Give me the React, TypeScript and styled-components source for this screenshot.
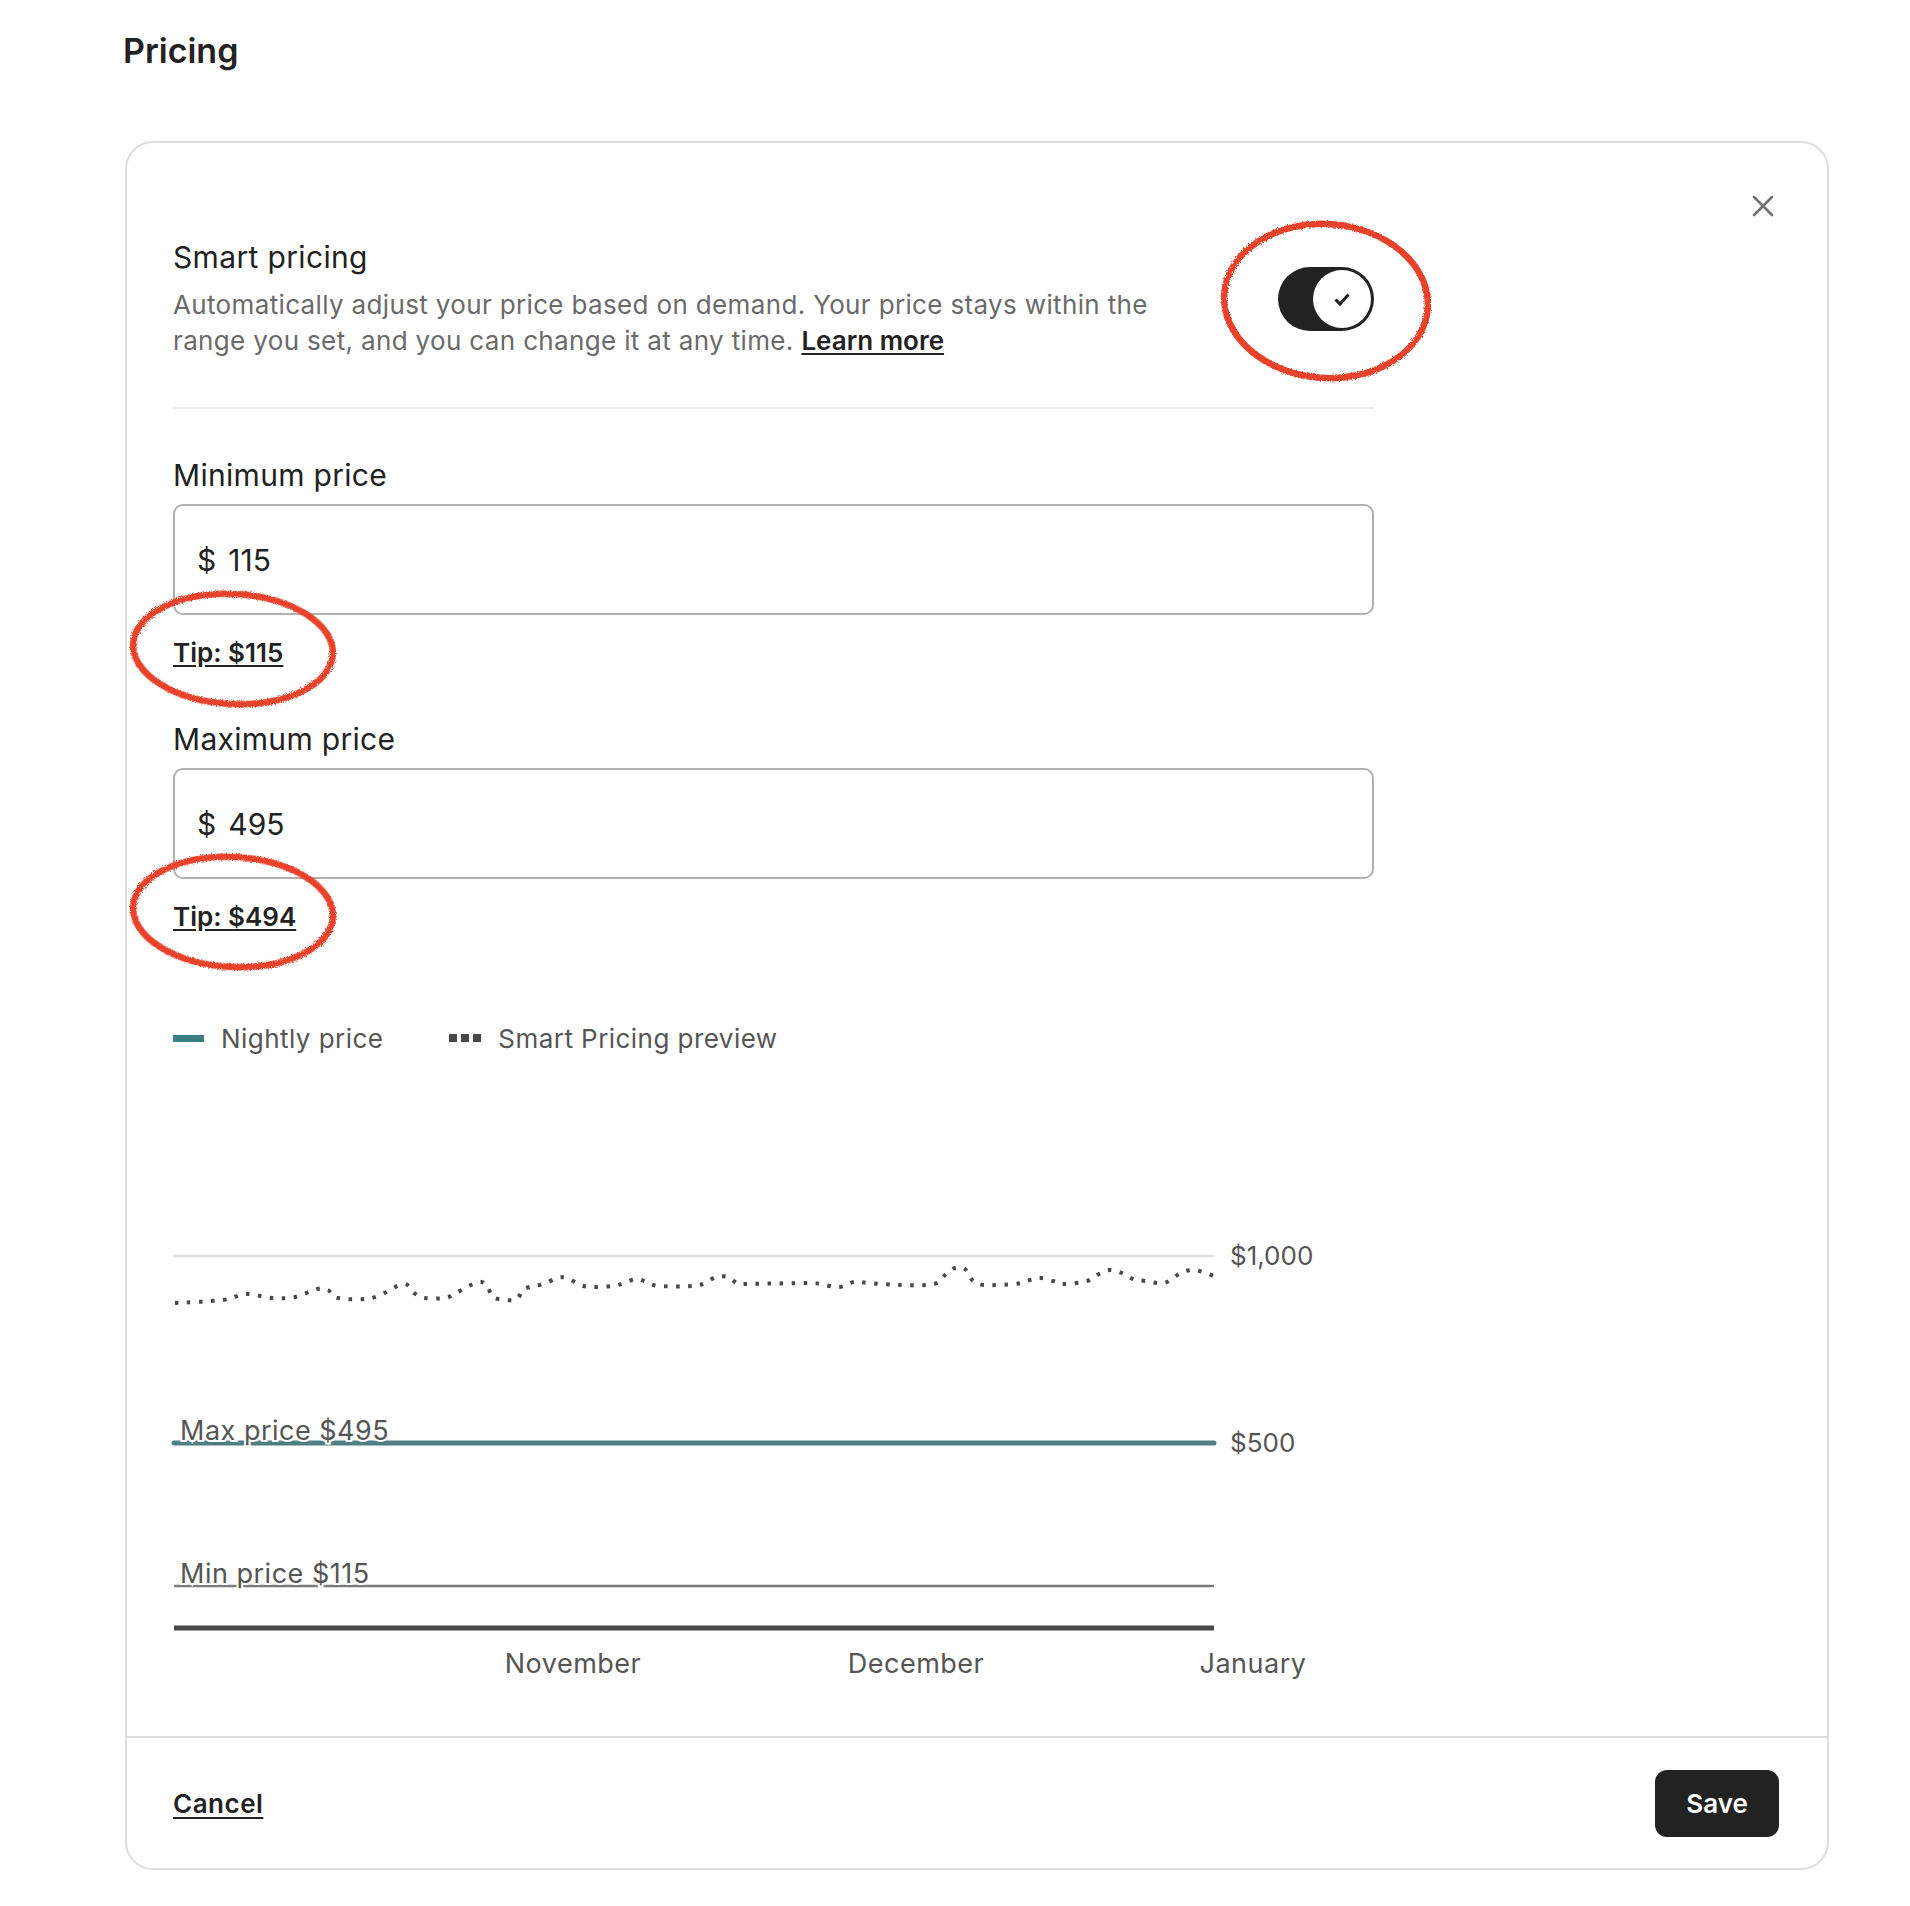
import React from "react";
import styled, { createGlobalStyle } from "styled-components";

const GlobalStyle = createGlobalStyle`
  body {
    margin: 0;
    background: #fff;
    font-family: Inter, "Noto Sans", "Liberation Sans", sans-serif;
    color: #222;
  }
`;

const Page = styled.div`
  position: relative;
  width: 1910px;
  min-height: 1906px;
  padding: 30px 0 0 125px;
  box-sizing: border-box;
`;

const PageTitle = styled.h1`
  margin: 0 0 69px -2px;
  font-size: 34px;
  line-height: 42px;
  font-weight: 600;
  color: #222;
`;

const Card = styled.section`
  position: relative;
  width: 1704px;
  border: 2px solid #dddddd;
  border-radius: 28px;
  box-sizing: border-box;
  background: #fff;
`;

const CloseButton = styled.button`
  position: absolute;
  top: 41px;
  right: 42px;
  width: 44px;
  height: 44px;
  border: none;
  background: transparent;
  display: flex;
  align-items: center;
  justify-content: center;
  cursor: pointer;
  padding: 0;
`;

const CardBody = styled.div`
  padding: 96px 48px 45px 46px;
`;

const Column = styled.div`
  width: 1201px;
`;

const SmartRow = styled.div`
  display: flex;
  align-items: center;
  justify-content: space-between;
  padding-bottom: 48px;
  border-bottom: 2px solid #ebebeb;
`;

const SmartText = styled.div`
  width: 1010px;
`;

const SectionTitle = styled.div`
  font-size: 30px;
  line-height: 36px;
  letter-spacing: 0.35px;
  color: #222;
`;

const Description = styled.p`
  margin: 12px 0 0;
  font-size: 26px;
  line-height: 36px;
  letter-spacing: 0.35px;
  color: #6a6a6a;
`;

const InlineLink = styled.a`
  color: #222;
  font-weight: 600;
  text-decoration: underline;
  text-underline-offset: 3px;
  letter-spacing: 0;
`;

const Switch = styled.button`
  width: 96px;
  height: 64px;
  border: none;
  border-radius: 32px;
  background: #222;
  padding: 3px;
  display: flex;
  justify-content: flex-end;
  align-items: center;
  box-sizing: border-box;
  cursor: pointer;
`;

const Knob = styled.span`
  width: 58px;
  height: 58px;
  border-radius: 50%;
  background: #fff;
  display: flex;
  align-items: center;
  justify-content: center;
`;

const FieldGroup = styled.div<{ $top: number }>`
  margin-top: ${(p) => p.$top}px;
`;

const FieldLabel = styled.label`
  display: block;
  font-size: 30px;
  line-height: 36px;
  letter-spacing: 0.3px;
  color: #222;
`;

const InputBox = styled.div`
  margin-top: 11px;
  height: 111px;
  border: 2px solid #b0b0b0;
  border-radius: 10px;
  box-sizing: border-box;
  display: flex;
  align-items: center;
  gap: 12px;
  padding: 0 22px;
  font-size: 30px;
  color: #222;
`;

const Tip = styled.a`
  display: inline-block;
  margin-top: 22px;
  font-size: 26px;
  line-height: 32px;
  font-weight: 600;
  color: #222;
  text-decoration: underline;
  text-underline-offset: 3px;
`;

const Legend = styled.div`
  margin-top: 87px;
  display: flex;
  align-items: center;
  height: 36px;
`;

const LegendItem = styled.div`
  display: flex;
  align-items: center;
  gap: 17px;
  font-size: 26px;
  letter-spacing: 0.45px;
  color: #555;
  & + & {
    margin-left: 66px;
  }
`;

const SolidSwatch = styled.span`
  width: 31px;
  height: 7px;
  background: #3a8083;
`;

const DotSwatch = styled.span`
  display: flex;
  gap: 4px;
  & > i {
    width: 8px;
    height: 8px;
    background: #484848;
  }
`;

const ChartSvg = styled.svg`
  display: block;
  margin-top: 45px;
  overflow: visible;
`;

const Footer = styled.footer`
  height: 132px;
  border-top: 2px solid #dddddd;
  box-sizing: border-box;
  padding: 0 48px 0 46px;
  display: flex;
  align-items: center;
  justify-content: space-between;
`;

const CancelLink = styled.a`
  font-size: 26px;
  font-weight: 600;
  letter-spacing: 0.5px;
  color: #222;
  text-decoration: underline;
  text-underline-offset: 4px;
`;

const SaveButton = styled.button`
  width: 124px;
  height: 67px;
  border: none;
  border-radius: 12px;
  background: #222;
  color: #fff;
  font-family: inherit;
  font-size: 26px;
  font-weight: 600;
  cursor: pointer;
`;

const Annotations = styled.svg`
  position: absolute;
  top: 0;
  left: 0;
  pointer-events: none;
`;

const preview: [number, number][] = [
  [2, 202], [50, 199], [73, 193], [99, 197], [122, 196], [144, 188], [155, 189],
  [165, 197], [199, 197], [230, 183], [241, 192], [252, 197], [272, 197], [283, 192],
  [305, 181], [314, 185], [320, 196], [333, 199], [344, 198], [350, 189], [360, 185],
  [371, 183], [384, 177], [394, 177], [406, 183], [417, 186], [440, 185], [451, 182],
  [463, 178], [474, 181], [486, 185], [520, 185], [532, 182], [543, 176], [555, 176],
  [565, 183], [574, 183], [635, 182], [647, 183], [666, 186], [681, 181], [696, 182],
  [727, 184], [761, 183], [773, 173], [782, 167], [792, 168], [800, 180], [811, 184],
  [842, 183], [857, 179], [868, 177], [880, 180], [891, 183], [914, 180], [926, 173],
  [937, 169], [949, 172], [960, 178], [972, 180], [991, 182], [1006, 173], [1018, 169],
  [1030, 171], [1041, 175],
];

const smoothPath = (pts: [number, number][]) => {
  let d = `M ${pts[0][0]} ${pts[0][1]}`;
  for (let i = 0; i < pts.length - 1; i++) {
    const p0 = pts[i - 1] || pts[i];
    const p1 = pts[i];
    const p2 = pts[i + 1];
    const p3 = pts[i + 2] || p2;
    const c1x = p1[0] + (p2[0] - p0[0]) / 6;
    const c1y = p1[1] + (p2[1] - p0[1]) / 6;
    const c2x = p2[0] - (p3[0] - p1[0]) / 6;
    const c2y = p2[1] - (p3[1] - p1[1]) / 6;
    d += ` C ${c1x} ${c1y} ${c2x} ${c2y} ${p2[0]} ${p2[1]}`;
  }
  return d;
};

const axisText = {
  fontFamily: "Inter, 'Noto Sans', sans-serif",
  fontSize: 26,
  fill: "#555",
};

const lineText = {
  ...axisText,
  fontSize: 27,
  letterSpacing: 0.5,
};

const PriceChart = () => (
  <ChartSvg width={1201} height={590} viewBox="0 0 1201 590">
    <line x1={1} y1={155} x2={1041} y2={155} stroke="#dddddd" strokeWidth={2.5} />
    <text x={1057} y={164} {...axisText}>$1,000</text>

    <path
      d={smoothPath(preview)}
      fill="none"
      stroke="#484848"
      strokeWidth={4}
      strokeDasharray="3.5 8.5"
    />

    <line x1={1} y1={342} x2={1041} y2={342} stroke="#4f7e83" strokeWidth={5} strokeLinecap="round" />
    <text x={1057} y={351} {...axisText}>$500</text>
    <text x={7} y={339} {...lineText} stroke="#fff" strokeWidth={4} paintOrder="stroke">
      Max price $495
    </text>

    <line x1={1} y1={485} x2={1041} y2={485} stroke="#7a7a7a" strokeWidth={2.5} />
    <text x={7} y={482} {...lineText} stroke="#fff" strokeWidth={4} paintOrder="stroke">
      Min price $115
    </text>

    <line x1={1} y1={527} x2={1041} y2={527} stroke="#484848" strokeWidth={5} />

    <text x={400} y={572} textAnchor="middle" {...lineText}>November</text>
    <text x={743} y={572} textAnchor="middle" {...lineText}>December</text>
    <text x={1080} y={572} textAnchor="middle" {...lineText}>January</text>
  </ChartSvg>
);

const PriceField = ({ label, value, tip, top }: { label: string; value: string; tip: string; top: number }) => (
  <FieldGroup $top={top}>
    <FieldLabel>{label}</FieldLabel>
    <InputBox>
      <span>$</span>
      <span>{value}</span>
    </InputBox>
    <Tip href="#">Tip: ${tip}</Tip>
  </FieldGroup>
);

export default function App() {
  return (
    <>
      <GlobalStyle />
      <Page>
        <PageTitle>Pricing</PageTitle>
        <Card>
          <CloseButton aria-label="Close">
            <svg width="22" height="22" viewBox="0 0 22 22">
              <path d="M2 2 L20 20 M20 2 L2 20" stroke="#717171" strokeWidth="2.6" strokeLinecap="round" />
            </svg>
          </CloseButton>
          <CardBody>
            <Column>
              <SmartRow>
                <SmartText>
                  <SectionTitle>Smart pricing</SectionTitle>
                  <Description>
                    Automatically adjust your price based on demand. Your price stays within the range you set, and
                    you can change it at any time. <InlineLink href="#">Learn more</InlineLink>
                  </Description>
                </SmartText>
                <Switch role="switch" aria-checked="true">
                  <Knob>
                    <svg width="20" height="20" viewBox="0 0 20 20">
                      <path d="M3.5 10.5 L8 15 L16.5 5.5" fill="none" stroke="#222" strokeWidth="3" />
                    </svg>
                  </Knob>
                </Switch>
              </SmartRow>

              <PriceField label="Minimum price" value="115" tip="115" top={48} />
              <PriceField label="Maximum price" value="495" tip="494" top={52} />

              <Legend>
                <LegendItem>
                  <SolidSwatch />
                  Nightly price
                </LegendItem>
                <LegendItem>
                  <DotSwatch>
                    <i />
                    <i />
                    <i />
                  </DotSwatch>
                  Smart Pricing preview
                </LegendItem>
              </Legend>

              <PriceChart />
            </Column>
          </CardBody>
          <Footer>
            <CancelLink href="#">Cancel</CancelLink>
            <SaveButton>Save</SaveButton>
          </Footer>
        </Card>

        <Annotations width={1910} height={1906} viewBox="0 0 1910 1906">
          <defs>
            <filter id="chalk" x="-10%" y="-10%" width="120%" height="120%">
              <feTurbulence type="fractalNoise" baseFrequency="0.8" numOctaves="2" result="noise" />
              <feDisplacementMap in="SourceGraphic" in2="noise" scale="4" />
            </filter>
          </defs>
          <g fill="none" stroke="#e8432a" strokeWidth={6.5} filter="url(#chalk)">
            <ellipse cx={1326} cy={301} rx={102} ry={77} transform="rotate(4 1326 301)" />
            <ellipse cx={233} cy={649} rx={100} ry={55} transform="rotate(3 233 649)" />
            <ellipse cx={233} cy={912} rx={100} ry={55} transform="rotate(3 233 912)" />
          </g>
        </Annotations>
      </Page>
    </>
  );
}
